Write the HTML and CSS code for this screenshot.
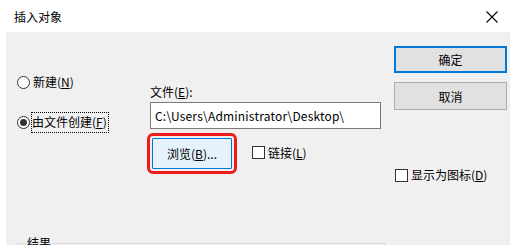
FILE: index.html
```html
<!DOCTYPE html>
<html lang="zh-CN">
<head>
<meta charset="utf-8">
<title>插入对象</title>
<link rel="stylesheet" href="styles.css">
</head>
<body>
<div class="dlg">
  <div class="titlebar">
    <span class="caption">插入对象</span>
    <svg class="close" width="12" height="12" viewBox="0 0 12 12"><path d="M0.5 0.5 L11.5 11.5 M11.5 0.5 L0.5 11.5" stroke="#000" stroke-width="1.1" fill="none"/></svg>
  </div>
  <div class="client">
    <div class="top">
      <div class="kind">
        <label class="opt"><span class="radio"></span><span class="txt">新建(<u>N</u>)</span></label>
        <label class="opt"><span class="radio on"></span><span class="txt focus">由文件创建(<u>F</u>)</span></label>
      </div>
      <div class="file">
        <div class="lbl">文件(<u>E</u>):</div>
        <div class="path">C:\Users\Administrator\Desktop\</div>
        <div class="filerow">
          <button class="btn browse">浏览(<u>B</u>)...</button>
          <label class="opt"><span class="check"></span><span class="txt">链接(<u>L</u>)</span></label>
        </div>
      </div>
      <div class="actions">
        <button class="btn ok">确定</button>
        <button class="btn cancel">取消</button>
        <label class="opt asicon"><span class="check"></span><span class="txt">显示为图标(<u>D</u>)</span></label>
      </div>
    </div>
    <fieldset class="result"><legend>结果</legend></fieldset>
  </div>
</div>
</body>
</html>
```

FILE: styles.css
```css
* {box-sizing: border-box;}
body {margin: 0; background: #fff; font-family: "Noto Sans CJK SC", "Microsoft YaHei", sans-serif; font-size: 12px; color: #000;}
u {text-decoration: underline; text-underline-offset: 1px;}

.dlg {width: 510px; height: 245px; overflow: hidden;}
.titlebar {height: 32px; display: flex; align-items: center; justify-content: space-between; padding: 0 12px 0 14px;}
.caption {font-size: 12px; line-height: 16px; margin-top: 2px;}
.close {display: block; margin-top: 1px;}

.client {margin-left: 6px; height: 213px; background: #f0f0f0; overflow: hidden;}
.top {display: grid; grid-template-columns: 144px 244px 113px; height: 152px;}

.opt {display: flex; align-items: center; height: 20px; line-height: 16px; white-space: nowrap;}
.radio {width: 13px; height: 13px; border: 1px solid #333; border-radius: 50%; background: #fff; display: flex; align-items: center; justify-content: center; margin-right: 3px;}
.radio.on::after {content: ""; width: 7px; height: 7px; border-radius: 50%; background: #333;}
.check {width: 13px; height: 13px; border: 1px solid #333; background: #fff; margin-right: 3px;}
.txt.focus {outline: 1px dotted #000; padding: 1px 1px 2px 0; margin-left: -1px;}

.kind {padding: 40px 0 0 11px; display: flex; flex-direction: column; gap: 20px;}

.file {padding-top: 52px;}
.lbl {line-height: 16px;}
.path {margin-top: 2px; width: 231px; height: 27px; border: 1px solid #7a7a7a; background: #fff; padding-left: 4px; line-height: 25px; white-space: nowrap; letter-spacing: 0.2px;}
.filerow {display: flex; align-items: center; margin-top: 9px;}
.filerow .opt {margin-left: 20px; margin-top: -2px;}

.btn {font: inherit; color: #000; padding: 0; border: 1px solid #adadad; background: #e1e1e1; display: block;}
.browse {margin-left: 2px; width: 80px; height: 31px; border-color: #0078d7; background: #e5f1fb; outline: 3px solid #ee1c1c; outline-offset: 2px; border-radius: 1px;}

.actions {padding-top: 14px;}
.ok {width: 113px; height: 27px; border: 2px solid #0078d7;}
.cancel {width: 113px; height: 28px; margin-top: 9px;}
.asicon {margin-top: 55px; margin-left: 1px;}

.result {margin: 51px 0 0 11px; width: 368px; height: 40px; border: 1px solid #dcdcdc; padding: 0;}
.result legend {margin-left: 7px; padding: 0 2px; line-height: 16px;}
```
